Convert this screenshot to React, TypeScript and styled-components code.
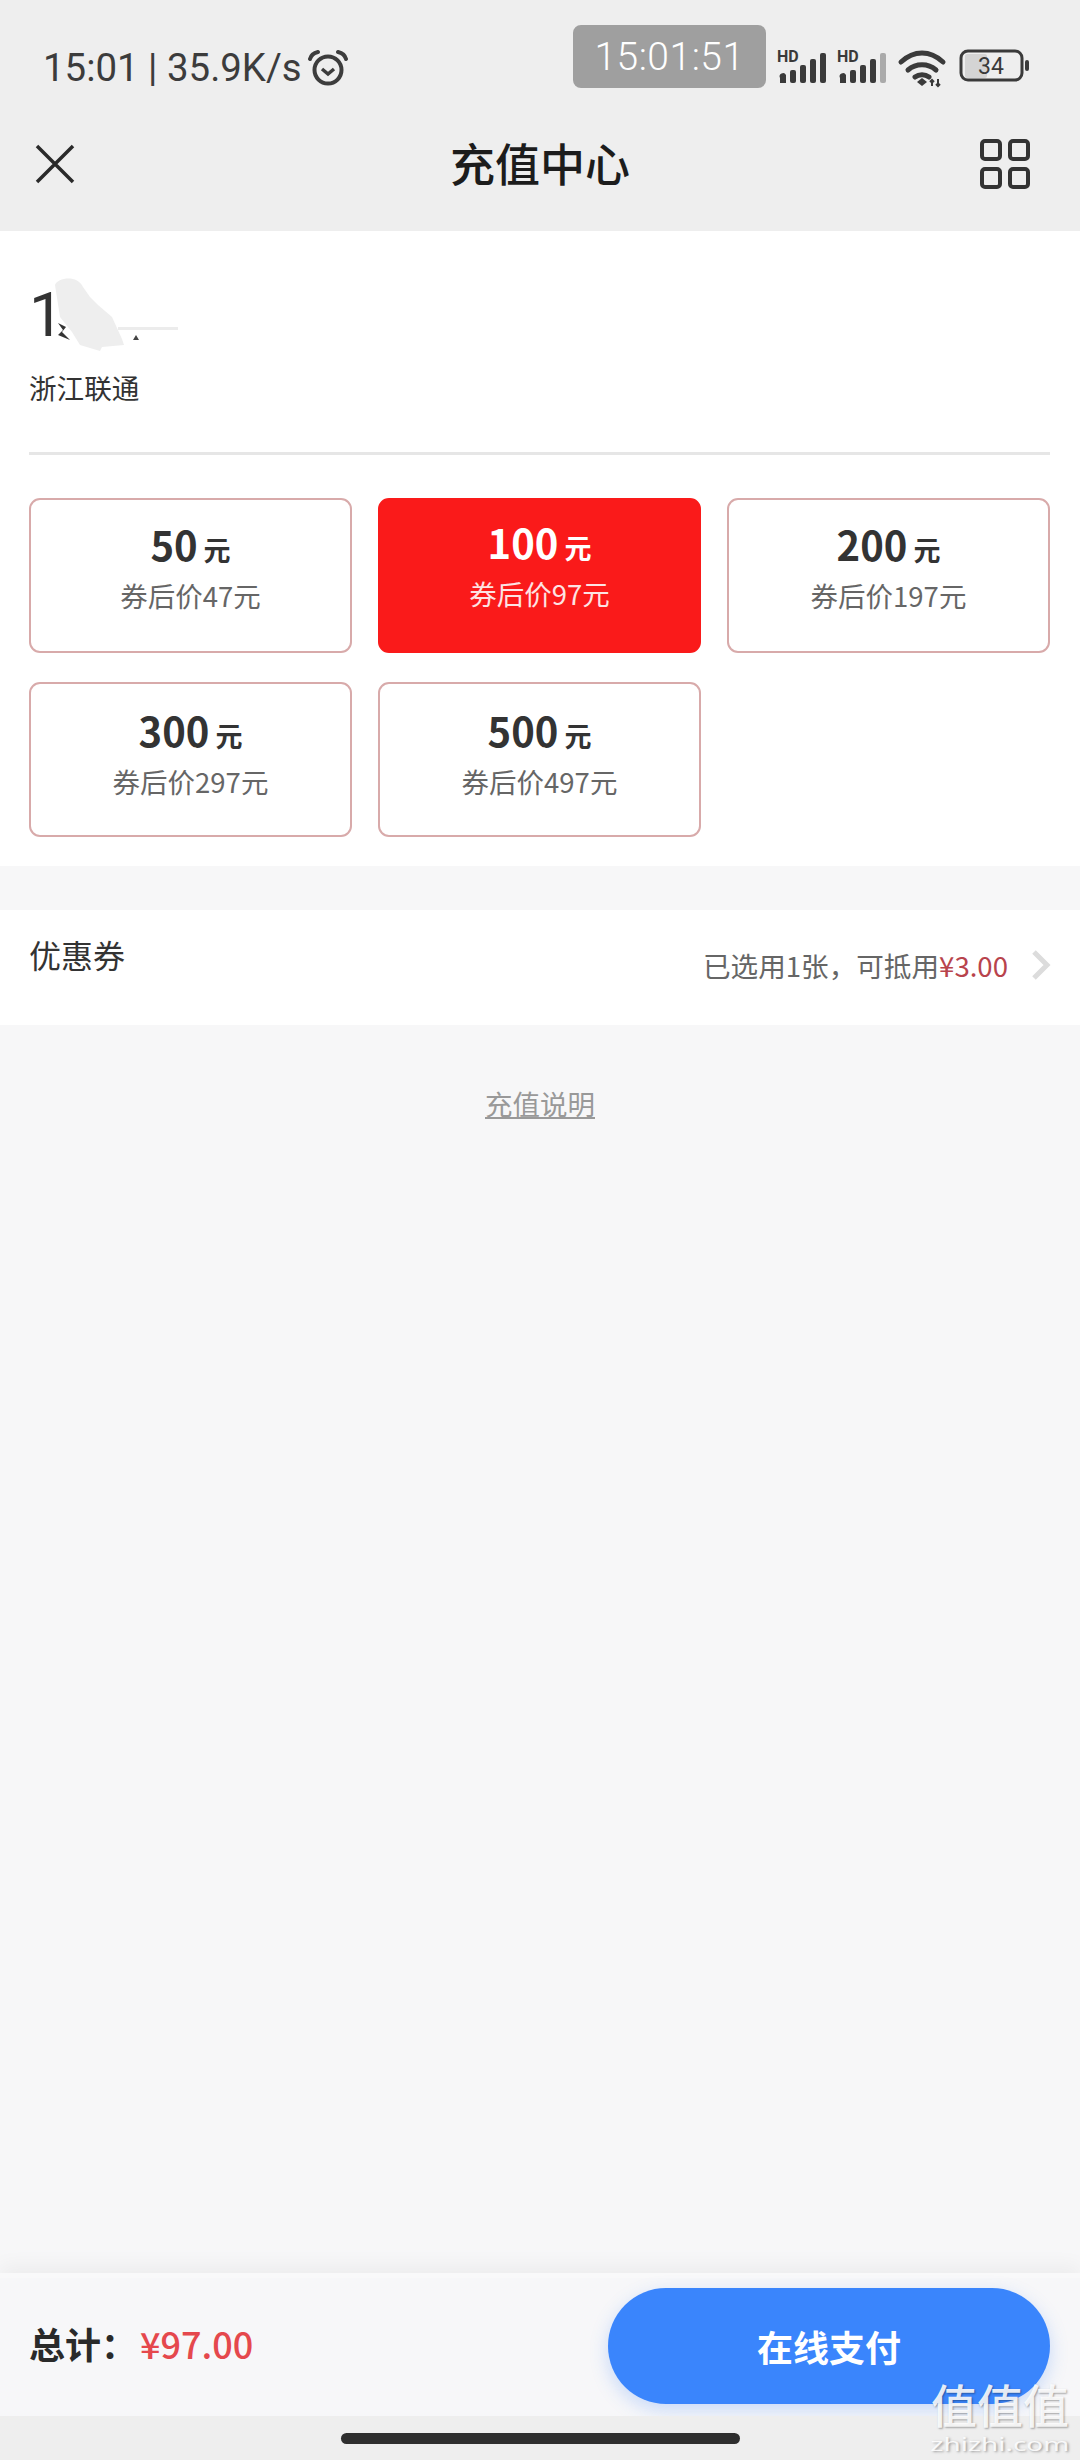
import React from 'react';
import styled, { createGlobalStyle } from 'styled-components';

const GlobalStyle = createGlobalStyle`
  html, body {
    margin: 0;
    padding: 0;
    background: #f7f7f8;
  }

  body {
    font-family: 'Noto Sans CJK SC', 'Noto Sans', sans-serif;
    color: #333;
  }

  * {
    box-sizing: border-box;
  }
`;

const Page = styled.div`
  position: relative;
  width: 1080px;
  height: 2460px;
  display: flex;
  flex-direction: column;
  overflow: hidden;
  background: #f7f7f8;
`;

const Header = styled.header`
  height: 231px;
  flex: none;
  display: flex;
  flex-direction: column;
  background: #eeeeee;
`;

const StatusBar = styled.div`
  height: 100px;
  display: flex;
  justify-content: space-between;
  padding: 25px 48px 0 43px;
`;

const StatusLeft = styled.div`
  display: flex;
  align-items: center;
  gap: 6px;
  height: 44px;
  margin-top: 21px;
`;

const StatusText = styled.span`
  font-family: Roboto, sans-serif;
  font-size: 38.4px;
  line-height: 44px;
  color: #3c3c3c;
  white-space: nowrap;
`;

const StatusRight = styled.div`
  display: flex;
  align-items: flex-start;
`;

const ClockPill = styled.div`
  width: 193px;
  height: 63px;
  display: flex;
  align-items: center;
  justify-content: center;
  margin-right: 11px;
  border-radius: 8px;
  background: #9f9f9f;
  color: #fff;
  font-family: Roboto, sans-serif;
  font-size: 39px;
  font-weight: 300;
  letter-spacing: 0.5px;
`;

const StatusIcons = styled.svg`
  display: block;
  margin-top: 22px;
`;

const NavBar = styled.div`
  flex: 1;
  display: grid;
  grid-template-columns: 1fr auto 1fr;
  align-items: center;
  padding: 0 50px 3px;
`;

const NavStart = styled.div`
  display: flex;
  margin-left: -15px;
`;

const NavTitle = styled.h1`
  margin: 0 0 3px;
  font-size: 45px;
  font-weight: 500;
  line-height: 60px;
  color: #1c1c1c;
`;

const NavEnd = styled.div`
  display: flex;
  justify-content: flex-end;
`;

const PlanCard = styled.section`
  height: 635px;
  flex: none;
  padding: 44px 30px 0 29px;
  background: #fff;
`;

const PhoneBlock = styled.div`
  position: relative;
  height: 180px;
  border-bottom: 3px solid #e6e6e6;
`;

const PhoneNumber = styled.div`
  font-family: Roboto, sans-serif;
  font-size: 62px;
  line-height: 80px;
  color: #333;
`;

const Carrier = styled.div`
  margin-top: 12px;
  font-size: 27.6px;
  line-height: 40px;
  color: #333;
`;

const MaskBlob = styled.svg`
  position: absolute;
  left: 21px;
  top: 2px;
`;

const AmountGrid = styled.div`
  display: grid;
  grid-template-columns: repeat(3, 1fr);
  grid-auto-rows: 155px;
  column-gap: 26px;
  row-gap: 29px;
  margin-top: 43px;
`;

const AmountOption = styled.div<{ $selected?: boolean }>`
  display: flex;
  flex-direction: column;
  align-items: center;
  padding-top: ${(props) => (props.$selected ? 17 : 19)}px;
  border: 2px solid ${(props) => (props.$selected ? '#fa1a1a' : '#d8aaaa')};
  border-radius: 11px;
  background: ${(props) => (props.$selected ? '#fa1a1a' : '#fff')};
  color: ${(props) => (props.$selected ? '#fff' : '#333')};

  &:nth-child(n + 4) {
    padding-top: 21px;
  }
`;

const AmountValue = styled.div`
  font-size: 40px;
  font-weight: 700;
  line-height: 50px;
  white-space: nowrap;
`;

const AmountUnit = styled.span`
  margin-left: 6px;
  font-size: 27px;
`;

const AmountPrice = styled.div<{ $selected?: boolean }>`
  margin-top: 2px;
  font-size: 27.5px;
  line-height: 36px;
  color: ${(props) => (props.$selected ? '#fde3e3' : '#666')};
`;

const CouponRow = styled.div`
  height: 115px;
  flex: none;
  display: flex;
  align-items: center;
  justify-content: space-between;
  margin-top: 44px;
  padding: 0 29px 0 29px;
  background: #fff;
`;

const CouponLabel = styled.div`
  margin-bottom: 27px;
  font-size: 32px;
  line-height: 44px;
  color: #333;
`;

const CouponInfo = styled.div`
  display: flex;
  align-items: center;
  gap: 23px;
  margin-bottom: 6px;
  font-size: 27.6px;
  line-height: 40px;
  color: #666;
`;

const CouponAmount = styled.span`
  color: #b8434c;
`;

const Content = styled.main`
  flex: 1;
  padding-top: 58px;
  text-align: center;
`;

const ExplainLink = styled.a`
  font-size: 27.5px;
  line-height: 40px;
  color: #999;
  text-decoration: underline;
`;

const Footer = styled.footer`
  height: 143px;
  flex: none;
  display: flex;
  align-items: center;
  justify-content: space-between;
  padding: 0 30px 0 29px;
  border-top: 5px solid #f9f9fa;
  background: #f7f7f9;
  box-shadow: 0 -8px 18px rgba(0, 0, 0, 0.045);
`;

const Total = styled.div`
  margin-bottom: 8px;
  font-size: 36px;
  font-weight: 700;
  line-height: 50px;
  color: #2a2a2a;
  white-space: nowrap;
`;

const TotalPrice = styled.span`
  margin-left: 3px;
  font-weight: 500;
  color: #e5484d;
`;

const PayButton = styled.button`
  width: 442px;
  height: 116px;
  margin-bottom: 2px;
  border: none;
  border-radius: 58px;
  background: #3a85fc;
  box-shadow: 0 6px 18px rgba(58, 133, 252, 0.25);
  color: #fff;
  font-family: inherit;
  font-size: 36px;
  font-weight: 700;
`;

const GestureArea = styled.div`
  height: 44px;
  flex: none;
  display: flex;
  justify-content: center;
  padding-top: 17px;
  background: #eeeeee;
`;

const HomeBar = styled.div`
  width: 399px;
  height: 11px;
  border-radius: 6px;
  background: #2e2e2e;
`;

const Watermark = styled.div`
  position: absolute;
  right: 10px;
  top: 2376px;
  width: 140px;
  display: flex;
  flex-direction: column;
  align-items: center;
  color: rgba(255, 255, 255, 0.88);
  text-shadow: 1px 1px 2px rgba(0, 0, 0, 0.35);
`;

const WatermarkMark = styled.div`
  font-size: 46px;
  font-weight: 500;
  line-height: 54px;
  white-space: nowrap;
`;

const WatermarkSite = styled.div`
  margin-top: 4px;
  font-family: 'Noto Sans', sans-serif;
  font-size: 18px;
  line-height: 20px;
  white-space: nowrap;
  transform: scaleX(1.55);
`;

const amounts = [
  { value: 50, price: 47 },
  { value: 100, price: 97, selected: true },
  { value: 200, price: 197 },
  { value: 300, price: 297 },
  { value: 500, price: 497 },
];

const SignalBars = ({ x, lastColor }: { x: number; lastColor: string }) => (
  <g transform={`translate(${x} 0)`}>
    <text x="0" y="15" fontFamily="Roboto, sans-serif" fontSize="16" fontWeight="700" fill="#3a3a3a">
      HD
    </text>
    <path d="M3 31a3 3 0 0 1 6-3v8H3z" fill="#3a3a3a" />
    <rect x="13" y="23" width="6" height="13" rx="2" fill="#3a3a3a" />
    <rect x="23" y="18" width="6" height="18" rx="2" fill="#3a3a3a" />
    <rect x="33" y="12" width="6" height="24" rx="2" fill="#3a3a3a" />
    <rect x="43" y="6" width="6" height="30" rx="2" fill={lastColor} />
  </g>
);

const StatusGlyphs = () => (
  <StatusIcons width="255" height="42" viewBox="0 0 255 42">
    <SignalBars x={0} lastColor="#3a3a3a" />
    <SignalBars x={60} lastColor="#aaaaaa" />
    <g fill="none" stroke="#3a3a3a" strokeWidth="5" strokeLinecap="round">
      <path d="M124 15c13-12 29-12 42 0" />
      <path d="M131 23c8-7 20-7 28 0" />
      <path d="M138 30c4-3 10-3 14 0" />
    </g>
    <path d="M145 31l5 4-5 4-5-4z" fill="#3a3a3a" />
    <path d="M155 33v6M161 39v-7M153 35l2-2 2 2M159 37l2 2 2-2" stroke="#3a3a3a" strokeWidth="2" fill="none" />
    <rect x="188" y="7" width="22" height="24" rx="2" fill="#d4d4d4" />
    <rect x="184" y="4" width="61" height="29" rx="7" fill="none" stroke="#3a3a3a" strokeWidth="3" />
    <text x="214" y="27" textAnchor="middle" fontFamily="Roboto, sans-serif" fontSize="23" fill="#3a3a3a">
      34
    </text>
    <rect x="248" y="13" width="4" height="11" rx="2" fill="#3a3a3a" />
  </StatusIcons>
);

export default function App() {
  return (
    <Page>
      <GlobalStyle />
      <Header>
        <StatusBar>
          <StatusLeft>
            <StatusText>15:01 | 35.9K/s</StatusText>
            <svg width="40" height="40" viewBox="0 0 40 40" fill="none" stroke="#3c3c3c">
              <circle cx="20" cy="22" r="13.5" strokeWidth="4" />
              <path d="M14 21l6 5 6-5" strokeWidth="3.5" />
              <path d="M2 11c1-4 4-6 8-7M38 11c-1-4-4-6-8-7" strokeWidth="4" strokeLinecap="round" />
            </svg>
          </StatusLeft>
          <StatusRight>
            <ClockPill>15:01:51</ClockPill>
            <StatusGlyphs />
          </StatusRight>
        </StatusBar>
        <NavBar>
          <NavStart>
            <svg width="40" height="40" viewBox="0 0 40 40" fill="none" stroke="#2a2a2a" strokeWidth="3.5">
              <path d="M2 2l36 36M38 2L2 38" />
            </svg>
          </NavStart>
          <NavTitle>充值中心</NavTitle>
          <NavEnd>
            <svg width="50" height="50" viewBox="0 0 50 50" fill="none" stroke="#333" strokeWidth="4">
              <rect x="2" y="2" width="18" height="18" rx="3" />
              <rect x="30" y="2" width="18" height="18" rx="3" />
              <rect x="2" y="30" width="18" height="18" rx="3" />
              <rect x="30" y="30" width="18" height="18" rx="3" />
            </svg>
          </NavEnd>
        </NavBar>
      </Header>

      <PlanCard>
        <PhoneBlock>
          <PhoneNumber>1</PhoneNumber>
          <Carrier>浙江联通</Carrier>
          <MaskBlob width="140" height="90" viewBox="0 0 140 90">
            <path d="M8 46l8 4-4 5 8 8-12-5 5-5z" fill="#333" />
            <path d="M86 58l3 5h-6z" fill="#444" />
            <path d="M68 50h60v3H68z" fill="#ececec" />
            <path
              d="M5 8C8 0 28-2 33 10l7 10 8 8 14 12 10 22 2 6-22 2-2 4-20-6-8-13L10 40z"
              fill="#eeeeee"
            />
          </MaskBlob>
        </PhoneBlock>
        <AmountGrid>
          {amounts.map((item) => (
            <AmountOption key={item.value} $selected={item.selected}>
              <AmountValue>
                {item.value}
                <AmountUnit>元</AmountUnit>
              </AmountValue>
              <AmountPrice $selected={item.selected}>券后价{item.price}元</AmountPrice>
            </AmountOption>
          ))}
        </AmountGrid>
      </PlanCard>

      <CouponRow>
        <CouponLabel>优惠券</CouponLabel>
        <CouponInfo>
          <span>
            已选用1张，可抵用<CouponAmount>¥3.00</CouponAmount>
          </span>
          <svg width="20" height="32" viewBox="0 0 20 32" fill="none" stroke="#dcdcdc" strokeWidth="5">
            <path d="M3 3l13 13L3 29" />
          </svg>
        </CouponInfo>
      </CouponRow>

      <Content>
        <ExplainLink>充值说明</ExplainLink>
      </Content>

      <Footer>
        <Total>
          总计：<TotalPrice>¥97.00</TotalPrice>
        </Total>
        <PayButton>在线支付</PayButton>
      </Footer>
      <GestureArea>
        <HomeBar />
      </GestureArea>

      <Watermark>
        <WatermarkMark>值值值</WatermarkMark>
        <WatermarkSite>zhizhi.com</WatermarkSite>
      </Watermark>
    </Page>
  );
}
